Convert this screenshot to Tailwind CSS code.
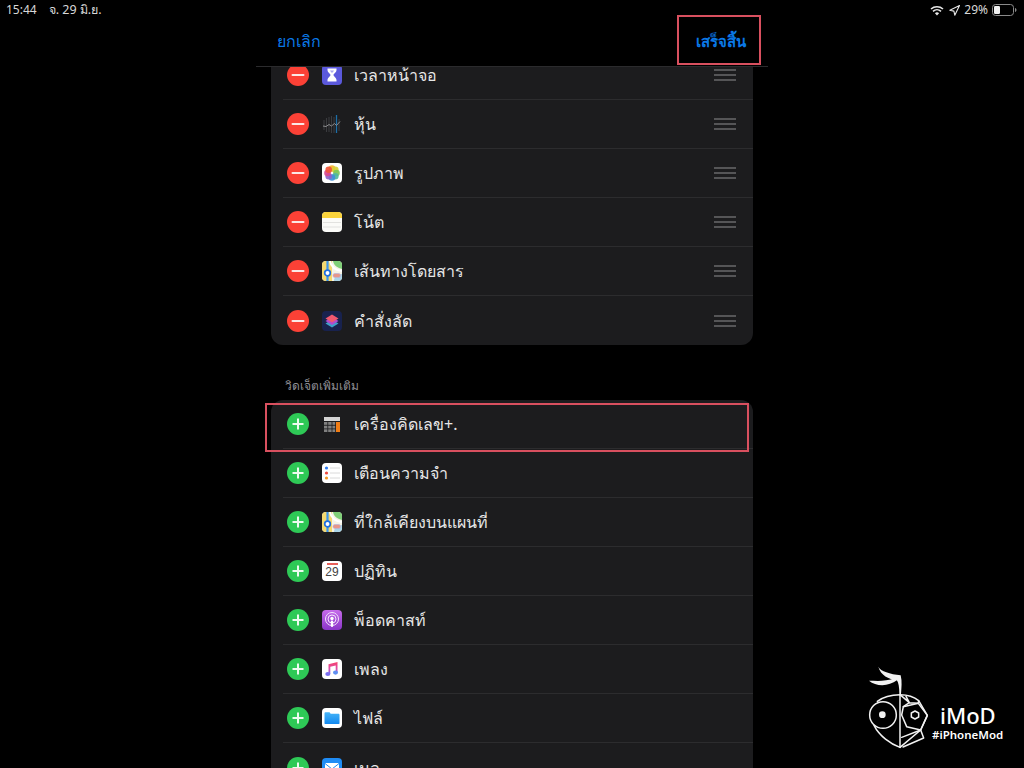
<!DOCTYPE html>
<html lang="th">
<head>
  <meta charset="UTF-8" />
  <title>แก้ไขวิดเจ็ต</title>
  <script src="https://cdn.jsdelivr.net/npm/@tailwindcss/browser@4"></script>
</head>
<body class="bg-black">
  <!-- shared icons -->
  <svg class="absolute w-0 h-0" xmlns="http://www.w3.org/2000/svg">
    <defs>
      <linearGradient id="note" x1="0" y1="0" x2="0" y2="1"><stop offset="0" stop-color="#f8406a"/><stop offset=".6" stop-color="#d84fb0"/><stop offset="1" stop-color="#6f6cf0"/></linearGradient>
      <linearGradient id="folder" x1="0" y1="0" x2="0" y2="1"><stop offset="0" stop-color="#46b4f7"/><stop offset="1" stop-color="#1188f0"/></linearGradient>
      <linearGradient id="podcast" x1="0" y1="0" x2="0" y2="1"><stop offset="0" stop-color="#c66bea"/><stop offset="1" stop-color="#8a35c8"/></linearGradient>
    </defs>
    <symbol id="maps" viewBox="0 0 20 20">
      <rect width="20" height="20" rx="4" fill="#f6f3e6"/>
      <path d="M0 4a4 4 0 0 1 4-4h6v20H4a4 4 0 0 1-4-4z" fill="#f3d870"/>
      <path d="M11 0h5a4 4 0 0 1 4 4v4c-4-1-8-3-9-8z" fill="#7fcf78"/>
      <path d="M8 0c1 6 5 9 12 10" stroke="#fff" stroke-width="2" fill="none"/>
      <path d="M12 20c0-4 3-7 8-7v3a4 4 0 0 1-4 4z" fill="#a9d4e8"/>
      <path d="M5.500 0v20" stroke="#3a95ee" stroke-width="2.200"/>
      <circle cx="5.500" cy="12" r="2.800" fill="#fff" stroke="#1f6fe0" stroke-width="1.700"/>
      <rect x="11" y="12.500" width="7.500" height="4" rx="1.800" fill="#e8968a" stroke="#b9b4d8" stroke-width=".7"/>
    </symbol>
    <symbol id="minus" viewBox="0 0 22 22">
      <circle cx="11" cy="11" r="11" fill="#fb4136"/>
      <rect x="4.500" y="10" width="13" height="2" rx="1" fill="#fbe9e7"/>
    </symbol>
    <symbol id="plus" viewBox="0 0 22 22">
      <circle cx="11" cy="11" r="11" fill="#2ec956"/>
      <path d="M11 5.500v11M5.500 11h11" stroke="#eefbf0" stroke-width="2"/>
    </symbol>
    <symbol id="grip" viewBox="0 0 22 12">
      <path d="M0 1h22M0 6h22M0 11h22" stroke="#555557" stroke-width="2"/>
    </symbol>
  </svg>

  <div class="relative w-[1024px] h-[768px] overflow-hidden bg-black flex flex-col font-['Noto_Sans','DejaVu_Sans','Liberation_Sans',sans-serif]">
    <!-- status bar -->
    <div class="h-[20px] flex items-center justify-between pl-[6px] pr-[7px] text-[12px] text-[#d8d8d8]">
      <div class="flex items-center gap-[12px]"><span>15:44</span><span class="text-[12.5px]">จ. 29 มิ.ย.</span></div>
      <div class="flex items-center gap-[4px]">
        <svg class="w-[14px] h-[11px]" viewBox="0 0 14 11"><path d="M1 4a9 9 0 0 1 12 0M3 6.300a6 6 0 0 1 8 0" stroke="#e8e8e8" stroke-width="1.600" fill="none"/><path d="M4.900 8.200a3 3 0 0 1 4.200 0L7 10.600z" fill="#e8e8e8"/></svg>
        <svg class="w-[11px] h-[11px] ml-[1px]" viewBox="0 0 11 11"><path d="M10.500.5 5.800 10.200 4.900 6.100.8 5.200z" stroke="#e8e8e8" stroke-width="1.100" fill="none" stroke-linejoin="round"/></svg>
        <span>29%</span>
        <svg class="w-[25px] h-[12px]" viewBox="0 0 25 12"><rect x=".5" y=".5" width="21" height="11" rx="3" stroke="#8a8a8a" fill="none"/><rect x="2" y="2" width="6" height="8" rx="1.200" fill="#f0f0f0"/><path d="M23 4v4c.9-.3 1.500-1 1.500-2s-.6-1.700-1.500-2z" fill="#8a8a8a"/></svg>
      </div>
    </div>

    <!-- nav bar -->
    <div class="w-[512px] h-[47px] mx-auto shrink-0 flex items-center justify-between pl-[21px] pr-[22px] border-b border-[#2b2b2d] text-[16px] text-[#0a78e6] relative z-10 bg-black">
      <span class="-mt-[4px]">ยกเลิก</span>
      <span class="-mt-[4px] text-[15px] font-bold">เสร็จสิ้น</span>
    </div>

    <!-- list -->
    <div class="w-[512px] mx-auto flex-1 overflow-hidden px-[15px]">
      <div class="-mt-[16px] bg-[#1c1c1e] rounded-b-[12px] pl-[12px] text-[16px] text-[#e6e6e6]">
        <div class="h-[49px] flex items-center pl-[4px] pr-[17px] border-b border-[#2c2c2e]">
          <svg class="w-[22px] h-[22px] mr-[13px]"><use href="#minus"/></svg>
          <svg class="w-[20px] h-[20px] mr-[12px]" viewBox="0 0 20 20"><rect width="20" height="20" rx="4" fill="#5b59dc"/><path d="M5.500 3.500h9v1.500c0 2.500-3 3.500-3 5s3 2.500 3 5v1.500h-9V15c0-2.500 3-3.500 3-5s-3-2.500-3-5z" fill="#fff"/><path d="M8 5.500h4c-.3 1-1.500 1.700-2 2.500-.5-.8-1.700-1.500-2-2.500z" fill="#a9a8ee"/></svg>
          <span class="flex-1">เวลาหน้าจอ</span>
          <svg class="w-[22px] h-[12px]"><use href="#grip"/></svg>
        </div>
        <div class="h-[49px] flex items-center pl-[4px] pr-[17px] border-b border-[#2c2c2e]">
          <svg class="w-[22px] h-[22px] mr-[13px]"><use href="#minus"/></svg>
          <svg class="w-[20px] h-[20px] mr-[12px]" viewBox="0 0 20 20"><path d="M2 6v10M4.500 4v14M7 3v15M9.500 2v17M12 3v16M17 5v12" stroke="#3a3b3e" stroke-width="1.100"/><path d="M14.500 1v18" stroke="#1d6fa8" stroke-width="1.300"/><path d="M1 12l3 .5 3-2 2.500 1.500 3-2.500 2 2 3.500-4" stroke="#8a8a8c" stroke-width="1" fill="none"/></svg>
          <span class="flex-1">หุ้น</span>
          <svg class="w-[22px] h-[12px]"><use href="#grip"/></svg>
        </div>
        <div class="h-[49px] flex items-center pl-[4px] pr-[17px] border-b border-[#2c2c2e]">
          <svg class="w-[22px] h-[22px] mr-[13px]"><use href="#minus"/></svg>
          <svg class="w-[20px] h-[20px] mr-[12px]" viewBox="0 0 20 20"><rect width="20" height="20" rx="4" fill="#fff"/><g fill-opacity=".92"><circle cx="10" cy="5.500" r="3.300" fill="#f7b52c"/><circle cx="13.300" cy="6.800" r="3.300" fill="#d8d03a"/><circle cx="14.500" cy="10" r="3.300" fill="#7cc65a"/><circle cx="13.300" cy="13.200" r="3.300" fill="#4fb9a0"/><circle cx="10" cy="14.500" r="3.300" fill="#3f8fd8"/><circle cx="6.700" cy="13.200" r="3.300" fill="#8e62c9"/><circle cx="5.500" cy="10" r="3.300" fill="#d8488f"/><circle cx="6.700" cy="6.800" r="3.300" fill="#f0553a"/></g></svg>
          <span class="flex-1">รูปภาพ</span>
          <svg class="w-[22px] h-[12px]"><use href="#grip"/></svg>
        </div>
        <div class="h-[49px] flex items-center pl-[4px] pr-[17px] border-b border-[#2c2c2e]">
          <svg class="w-[22px] h-[22px] mr-[13px]"><use href="#minus"/></svg>
          <svg class="w-[20px] h-[20px] mr-[12px]" viewBox="0 0 20 20"><rect width="20" height="20" rx="4" fill="#fbfbf8"/><path d="M0 6V4a4 4 0 0 1 4-4h12a4 4 0 0 1 4 4v2z" fill="#fbd43c"/><path d="M1 10.500h18M1 15h18" stroke="#dcdcd8" stroke-width=".8"/></svg>
          <span class="flex-1">โน้ต</span>
          <svg class="w-[22px] h-[12px]"><use href="#grip"/></svg>
        </div>
        <div class="h-[49px] flex items-center pl-[4px] pr-[17px] border-b border-[#2c2c2e]">
          <svg class="w-[22px] h-[22px] mr-[13px]"><use href="#minus"/></svg>
          <svg class="w-[20px] h-[20px] mr-[12px]"><use href="#maps"/></svg>
          <span class="flex-1">เส้นทางโดยสาร</span>
          <svg class="w-[22px] h-[12px]"><use href="#grip"/></svg>
        </div>
        <div class="h-[49px] flex items-center pl-[4px] pr-[17px]">
          <svg class="w-[22px] h-[22px] mr-[13px]"><use href="#minus"/></svg>
          <svg class="w-[20px] h-[20px] mr-[12px]" viewBox="0 0 20 20"><rect width="20" height="20" rx="4" fill="#18224e"/><path d="M10 8.500 16.500 12.500 10 16.500 3.500 12.500z" fill="#3fa0c8"/><path d="M10 6 16.500 10 10 14 3.500 10z" fill="#b04bd0"/><path d="M10 3.500 16.500 7.500 10 11.500 3.500 7.500z" fill="#f0586f"/></svg>
          <span class="flex-1">คำสั่งลัด</span>
          <svg class="w-[22px] h-[12px]"><use href="#grip"/></svg>
        </div>
      </div>

      <div class="h-[55px] flex items-end pb-[5px] pl-[14px] text-[12px] text-[#8e8e93]">วิดเจ็ตเพิ่มเติม</div>

      <div class="bg-[#1c1c1e] rounded-t-[12px] pl-[12px] text-[16px] text-[#e6e6e6]">
        <div class="h-[49px] flex items-center pl-[4px] border-b border-[#2c2c2e]">
          <svg class="w-[22px] h-[22px] mr-[13px]"><use href="#plus"/></svg>
          <svg class="w-[20px] h-[20px] mr-[12px]" viewBox="0 0 20 20"><rect x="2" y="3" width="16" height="4" fill="#d4d4d4"/><g fill="#808080"><rect x="2" y="8" width="3.400" height="2.800"/><rect x="6.200" y="8" width="3.400" height="2.800"/><rect x="10.400" y="8" width="2.800" height="2.800"/><rect x="2" y="11.700" width="3.400" height="2.800"/><rect x="6.200" y="11.700" width="3.400" height="2.800"/><rect x="10.400" y="11.700" width="2.800" height="2.800"/><rect x="2" y="15.300" width="3.400" height="2.700"/><rect x="6.200" y="15.300" width="3.400" height="2.700"/><rect x="10.400" y="15.300" width="2.800" height="2.700"/></g><rect x="14" y="8" width="4" height="10" fill="#f07d16"/></svg>
          <span>เครื่องคิดเลข+.</span>
        </div>
        <div class="h-[49px] flex items-center pl-[4px] border-b border-[#2c2c2e]">
          <svg class="w-[22px] h-[22px] mr-[13px]"><use href="#plus"/></svg>
          <svg class="w-[20px] h-[20px] mr-[12px]" viewBox="0 0 20 20"><rect width="20" height="20" rx="4" fill="#fff"/><circle cx="4.500" cy="5" r="1.600" fill="#2f7bf0"/><circle cx="4.500" cy="10" r="1.600" fill="#f0493e"/><circle cx="4.500" cy="15" r="1.600" fill="#f59a23"/><path d="M8 5h10M8 10h10M8 15h10" stroke="#d0d0d0" stroke-width=".8"/></svg>
          <span>เตือนความจำ</span>
        </div>
        <div class="h-[49px] flex items-center pl-[4px] border-b border-[#2c2c2e]">
          <svg class="w-[22px] h-[22px] mr-[13px]"><use href="#plus"/></svg>
          <svg class="w-[20px] h-[20px] mr-[12px]"><use href="#maps"/></svg>
          <span>ที่ใกล้เคียงบนแผนที่</span>
        </div>
        <div class="h-[49px] flex items-center pl-[4px] border-b border-[#2c2c2e]">
          <svg class="w-[22px] h-[22px] mr-[13px]"><use href="#plus"/></svg>
          <div class="w-[20px] h-[20px] mr-[12px] rounded-[4px] bg-white flex flex-col items-center overflow-hidden">
            <div class="w-[11px] h-[2px] mt-[2px] bg-[#e8605a]"></div>
            <div class="text-[12px] leading-[15px] text-[#444] font-['Liberation_Sans',sans-serif]">29</div>
          </div>
          <span>ปฏิทิน</span>
        </div>
        <div class="h-[49px] flex items-center pl-[4px] border-b border-[#2c2c2e]">
          <svg class="w-[22px] h-[22px] mr-[13px]"><use href="#plus"/></svg>
          <svg class="w-[20px] h-[20px] mr-[12px]" viewBox="0 0 20 20"><rect width="20" height="20" rx="4" fill="url(#podcast)"/><circle cx="10" cy="9" r="6.500" stroke="#f3e3fb" stroke-width="1" fill="none"/><circle cx="10" cy="9" r="4" stroke="#f3e3fb" stroke-width="1" fill="none"/><circle cx="10" cy="8.500" r="1.700" fill="#fff"/><rect x="8.800" y="10.500" width="2.400" height="6.500" rx="1.200" fill="#fff"/></svg>
          <span>พ็อดคาสท์</span>
        </div>
        <div class="h-[49px] flex items-center pl-[4px] border-b border-[#2c2c2e]">
          <svg class="w-[22px] h-[22px] mr-[13px]"><use href="#plus"/></svg>
          <svg class="w-[20px] h-[20px] mr-[12px]" viewBox="0 0 20 20"><rect width="20" height="20" rx="4" fill="#fff"/><path d="M6.500 15V5.200L15.500 3v10.500h-1.800V6.500L8.300 7.800V15z" fill="url(#note)"/><ellipse cx="5.800" cy="15" rx="2.500" ry="2.100" fill="#7a6ef0"/><ellipse cx="13.500" cy="13.600" rx="2.500" ry="2.100" fill="#5f8ff2"/></svg>
          <span>เพลง</span>
        </div>
        <div class="h-[49px] flex items-center pl-[4px] border-b border-[#2c2c2e]">
          <svg class="w-[22px] h-[22px] mr-[13px]"><use href="#plus"/></svg>
          <svg class="w-[20px] h-[20px] mr-[12px]" viewBox="0 0 20 20"><rect width="20" height="20" rx="4" fill="#fff"/><path d="M2.500 5.500c0-.8.400-1.200 1.200-1.200h3.800l1.200 1.400h7.600c.8 0 1.200.4 1.200 1.200v8c0 .8-.4 1.200-1.200 1.200H3.700c-.8 0-1.200-.4-1.200-1.200z" fill="url(#folder)"/></svg>
          <span>ไฟล์</span>
        </div>
        <div class="h-[49px] flex items-center pl-[4px]">
          <svg class="w-[22px] h-[22px] mr-[13px]"><use href="#plus"/></svg>
          <svg class="w-[20px] h-[20px] mr-[12px]" viewBox="0 0 20 20"><rect width="20" height="20" rx="4" fill="#1f8cf5"/><rect x="3" y="5" width="14" height="10" rx="1" fill="#fff"/><path d="M3 5.500l7 5.500 7-5.500" stroke="#1f8cf5" fill="none"/></svg>
          <span>เมล</span>
        </div>
      </div>
    </div>

    <!-- red annotation boxes -->
    <div class="absolute left-[677px] top-[15px] w-[84px] h-[50px] border-[2px] border-[#d9505f] z-20"></div>
    <div class="absolute left-[265px] top-[403px] w-[484px] h-[49px] border-[2px] border-[#d9505f] z-20"></div>

    <!-- watermark -->
    <div class="absolute left-[850px] top-[650px] w-[174px] h-[118px] z-20">
      <svg class="absolute inset-0 w-[174px] h-[118px]" viewBox="0 0 522 354" fill="none" stroke="#f2f2f2" stroke-width="4.500" stroke-linejoin="round" stroke-linecap="round">
        <path d="M85 50C92 64 120 72 152 76C157 95 154 115 153 132L148 132C148 112 146 98 140 90C116 88 92 76 85 50z" fill="#f2f2f2" stroke="none"/>
        <path d="M57 92C76 92 104 96 136 84L141 91C116 110 78 110 57 92z" fill="#f2f2f2" stroke="none"/>
        <path d="M150 134v158"/>
        <path d="M150 134c-26 0-50 6-68 20"/>
        <circle cx="99" cy="195" r="40"/>
        <circle cx="97" cy="194" r="10" fill="#f2f2f2" stroke="none"/>
        <path d="M72 226c16 32 50 56 78 66"/>
        <path d="M150 134c24 0 42 6 56 18l26 44-20 44-62 52"/>
        <path d="M160 170l45-10 27 36-20 44-42-10-15-35z"/>
        <path d="M150 134l28 24-18 12M178 158l27 2 1-8M168 139l10 19"/>
        <path d="M155 262l57-22 9 24-62 27"/>
        <path d="M195 183l11 6v12l-11 6-11-6v-12z"/>
      </svg>
      <div class="absolute left-[90px] top-[54px] text-[22px] leading-[22px] font-medium text-white font-['Noto_Sans',sans-serif]">iMoD</div>
      <div class="absolute left-[82px] top-[78px] text-[11.500px] leading-[14px] font-semibold text-white font-['Noto_Sans',sans-serif]">#iPhoneMod</div>
    </div>
  </div>
</body>
</html>
